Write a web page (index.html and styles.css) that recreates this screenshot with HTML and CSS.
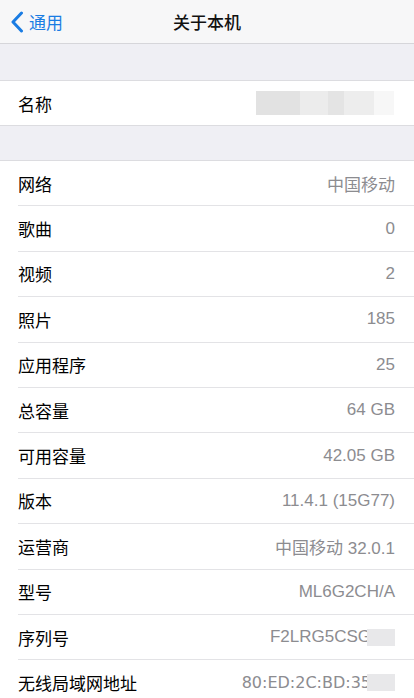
FILE: index.html
```html
<!DOCTYPE html>
<html lang="zh-CN">
<head>
    <meta charset="UTF-8">
    <meta name="viewport" content="width=device-width, initial-scale=1.0">
    <title>关于本机</title>
    <link rel="stylesheet" href="styles.css">
</head>
<body>

    <div class="navbar">
        <div class="back">
            <svg class="chevron" width="14" height="22" viewBox="0 0 14 22">
                <path d="M11.5 2 L3 11 L11.5 20" fill="none" stroke="#1a7ce3" stroke-width="3" stroke-linecap="round" stroke-linejoin="round"/>
            </svg>
            <span>通用</span>
        </div>
        <div class="title">关于本机</div>
    </div>

    <div class="gap gap-top"></div>

    <div class="group">
        <div class="row">
            <span class="label">名称</span>
            <span class="mosaic">
                <i class="m1"></i><i class="m2"></i><i class="m3"></i><i class="m4"></i><i class="m5"></i>
            </span>
        </div>
    </div>

    <div class="gap"></div>

    <div class="group" id="info"></div>

    <script>
        const rows = [
            ['网络', '中国移动'],
            ['歌曲', '0'],
            ['视频', '2'],
            ['照片', '185'],
            ['应用程序', '25'],
            ['总容量', '64 GB'],
            ['可用容量', '42.05 GB'],
            ['版本', '11.4.1 (15G77)'],
            ['运营商', '中国移动 32.0.1'],
            ['型号', 'ML6G2CH/A'],
            ['序列号', 'F2LRG5CSG', 'blur'],
            ['无线局域网地址', '80:ED:2C:BD:35', 'blur mac']
        ];

        const info = document.getElementById('info');
        rows.forEach(r => {
            const row = document.createElement('div');
            row.className = 'row';
            let html = '<span class="label">' + r[0] + '</span><span class="value">' + r[1];
            if (r[2]) html += '<i class="hide"></i>';
            html += '</span>';
            row.innerHTML = html;
            if (r[2] && r[2].indexOf('mac') >= 0) row.querySelector('.value').classList.add('mac');
            info.appendChild(row);
        });
    </script>

</body>
</html>
```

FILE: styles.css
```css
body {
    margin: 0;
    background-color: #efeff4;
    font-family: "Noto Sans CJK SC", "Liberation Sans", sans-serif;
    overflow: hidden;
}
.navbar {
    height: 44px;
    background-color: #f7f7f8;
    border-bottom: 1px solid #d6d6da;
    box-sizing: border-box;
    display: flex;
    align-items: center;
    justify-content: center;
    position: relative;
}
.back {
    position: absolute;
    left: 10px;
    top: 0;
    height: 43px;
    display: flex;
    align-items: center;
    color: #1a7ce3;
    font-size: 17px;
}
.chevron {
    margin-right: 5px;
}
.title {
    font-size: 17px;
    font-weight: 500;
    color: #111;
}
.gap {
    height: 34px;
}
.gap-top {
    height: 36px;
}
.group {
    background-color: #fff;
    border-top: 1px solid #dcdce0;
    border-bottom: 1px solid #dcdce0;
}
.row {
    height: 45.4px;
    margin-left: 18px;
    padding-right: 19px;
    box-sizing: border-box;
    display: flex;
    align-items: center;
    justify-content: space-between;
    border-bottom: 1px solid #e3e3e6;
}
.row:last-child {
    border-bottom: none;
    height: 44px;
}
.label {
    font-size: 17px;
    color: #000;
}
.value {
    font-family: "Liberation Sans", "Noto Sans CJK SC", sans-serif;
    font-size: 17px;
    color: #8c8c90;
    display: flex;
    align-items: center;
}
.value.mac {
    font-family: "DejaVu Sans", "Noto Sans CJK SC", sans-serif;
    font-size: 16px;
}
.hide {
    display: inline-block;
    width: 28px;
    height: 17px;
    margin-left: -4px;
    background-color: #e8e8ea;
}
.mosaic {
    display: flex;
    align-items: center;
    margin-right: 1px;
}
.mosaic i {
    display: inline-block;
    height: 24px;
}
.m1 {
    width: 44px;
    background-color: #e2e2e2;
}
.m2 {
    width: 28px;
    background-color: #ececec;
}
.m3 {
    width: 16px;
    background-color: #e4e4e4;
}
.m4 {
    width: 30px;
    background-color: #ededed;
}
.m5 {
    width: 20px;
    background-color: #f7f7f7;
}
```
